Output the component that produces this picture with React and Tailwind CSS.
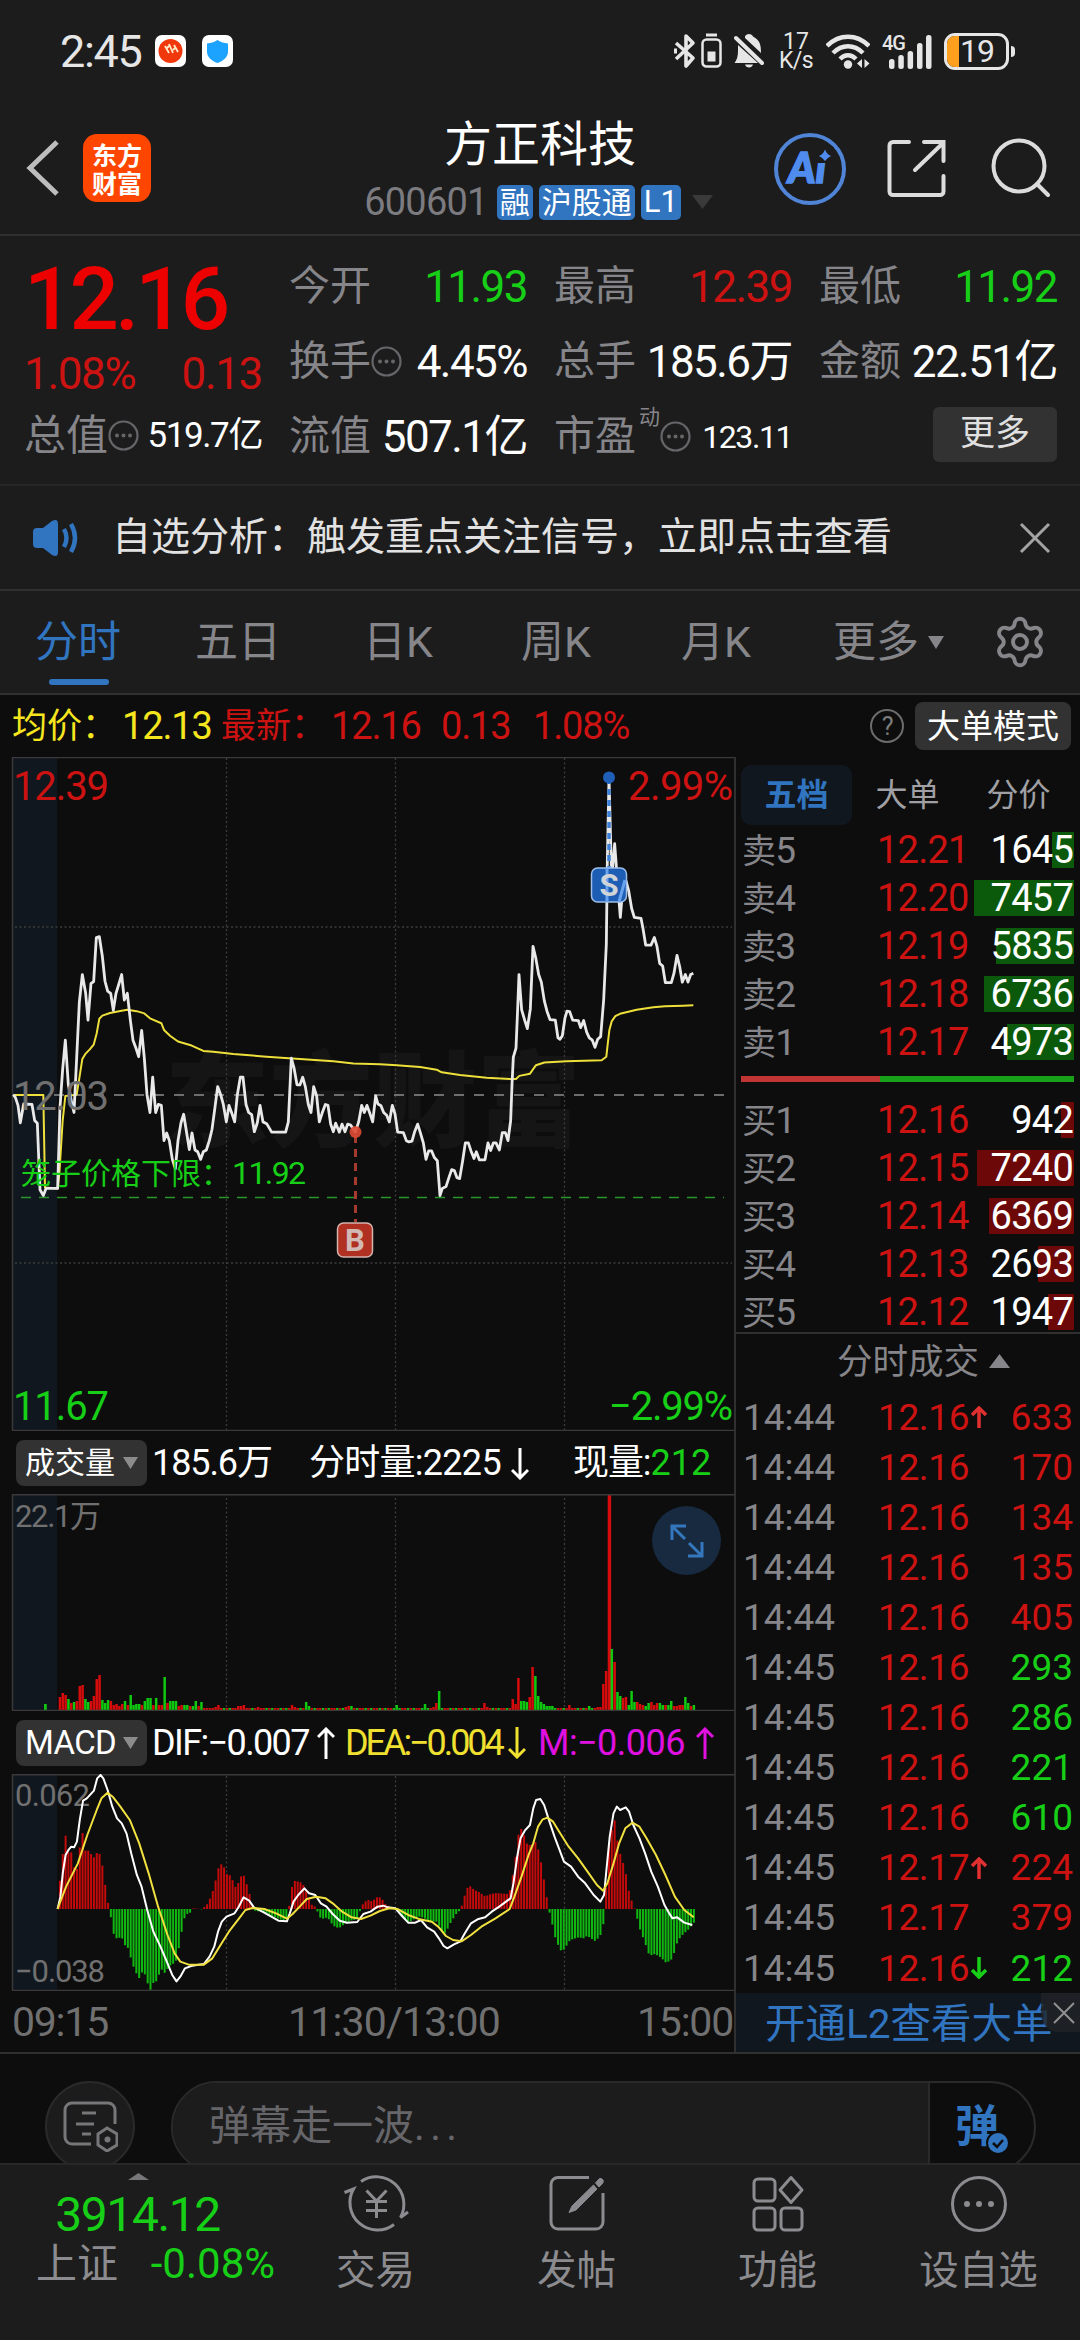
import { Settings } from "lucide-react";

const PRICE_LINE =
  "40,772 46,778 54,796 61,835 71,793 96,794 104,830 112,836 120,985 130,998 138,982 173,982 180,800 188,715 196,650 205,750 215,790 222,812 230,690 238,565 247,503 257,545 264,605 273,523 281,519 289,420 298,418 307,462 315,518 323,540 332,545 340,583 348,545 357,523 365,503 373,560 382,545 391,605 399,650 408,668 416,687 425,628 433,690 441,772 450,812 458,733 467,812 475,794 484,796 492,875 500,858 508,875 517,917 526,938 534,875 543,835 551,816 560,858 568,895 576,858 585,896 593,900 602,917 610,900 619,896 628,875 636,850 645,800 653,754 662,772 670,794 679,833 687,796 696,815 704,833 712,772 721,733 729,733 738,794 746,812 755,817 763,855 772,835 780,796 789,833 800,837 815,856 857,856 865,833 874,690 882,712 891,750 900,750 908,733 916,754 925,794 933,812 941,754 950,775 958,833 967,812 976,794 984,796 992,838 1000,855 1007,836 1018,856 1026,838 1035,855 1043,838 1052,840 1066,856 1076,833 1085,796 1093,812 1101,796 1110,815 1118,833 1127,775 1134,793 1143,797 1151,812 1160,818 1168,833 1177,796 1185,815 1193,856 1210,857 1219,875 1227,878 1236,876 1244,855 1253,838 1261,857 1270,880 1278,917 1286,898 1295,898 1303,913 1312,920 1320,998 1327,982 1338,978 1348,955 1355,940 1363,942 1371,958 1379,960 1388,920 1396,880 1405,880 1413,898 1422,915 1429,900 1438,918 1455,918 1464,880 1472,897 1480,880 1488,880 1498,896 1507,857 1516,857 1524,875 1532,830 1536,750 1540,688 1548,668 1553,580 1557,503 1565,582 1574,605 1582,624 1591,580 1599,440 1607,465 1616,503 1624,520 1633,562 1641,585 1650,604 1666,605 1674,645 1680,648 1687,640 1695,600 1701,585 1709,586 1718,605 1735,606 1742,622 1751,606 1760,632 1768,645 1777,650 1785,666 1793,648 1802,642 1811,560 1819,435 1822,250 1827,62 1835,290 1844,210 1852,290 1861,375 1870,293 1878,293 1886,315 1895,355 1903,375 1923,377 1929,400 1937,437 1953,437 1963,420 1971,440 1979,478 1988,484 1996,521 2014,521 2022,500 2031,460 2039,485 2047,520 2056,503 2064,520 2072,503 2080,500";

const AVG_LINE =
  "40,773 130,773 135,980 173,982 178,950 188,830 196,775 230,772 238,735 247,692 257,680 270,670 281,660 290,635 298,602 307,595 330,589 365,584 382,582 410,585 433,590 450,601 484,612 492,627 510,640 534,653 575,662 610,674 640,676 700,681 800,687 900,692 1000,697 1060,702 1140,704 1190,706 1260,710 1310,716 1325,722 1380,728 1460,734 1530,737 1548,737 1558,730 1590,725 1608,706 1633,700 1700,697 1805,695 1819,687 1823,660 1828,628 1835,608 1846,596 1860,591 1910,582 1960,576 1995,574 2050,573 2080,572";

const DIF_LINE =
  "122,597 128,560 133,490 139,435 146,418 151,410 157,412 163,395 169,330 176,272 184,265 199,242 206,205 213,195 219,205 228,240 238,290 248,325 258,340 268,370 278,430 290,495 300,530 312,600 325,665 340,710 355,760 365,795 374,814 382,800 392,775 405,768 420,764 432,762 444,740 454,710 462,665 470,635 480,620 497,610 506,590 516,562 528,572 538,592 556,605 575,620 590,632 608,634 614,610 622,575 632,555 645,535 655,550 668,555 680,580 692,590 705,612 720,632 735,638 757,636 770,612 785,605 800,590 812,587 822,592 838,595 850,615 865,638 880,638 892,630 905,652 920,665 930,685 940,708 948,715 962,703 975,695 985,670 998,640 1012,628 1028,622 1042,605 1058,590 1075,572 1082,565 1088,520 1096,440 1103,385 1112,362 1123,345 1130,295 1136,270 1145,267 1153,285 1162,325 1175,380 1195,455 1210,470 1225,500 1240,520 1258,555 1272,575 1280,555 1285,480 1292,380 1300,310 1307,290 1314,300 1326,292 1333,305 1342,345 1355,385 1367,430 1380,485 1394,530 1408,585 1418,610 1425,625 1435,622 1450,638 1467,645";

const DEA_LINE =
  "122,597 140,530 165,460 185,375 205,300 215,265 228,248 240,262 255,290 275,330 295,400 315,490 335,590 355,675 370,730 382,755 400,764 432,764 450,745 465,710 485,665 505,628 520,600 535,594 560,597 585,610 608,626 620,612 635,590 650,567 670,560 690,565 705,580 725,605 745,622 765,627 785,617 805,603 825,595 842,597 865,615 890,628 915,635 930,652 945,678 960,690 978,694 998,675 1020,650 1050,625 1080,597 1090,560 1105,500 1120,435 1130,400 1140,350 1150,328 1160,323 1172,335 1185,365 1205,410 1225,445 1245,485 1265,525 1278,542 1287,520 1300,460 1312,400 1325,355 1340,338 1355,350 1370,385 1390,435 1410,495 1430,560 1450,600 1470,622";

// histogram turning points: [x, height]
const MACD_KEYS = [
  [127, 85], [133, 165], [139, 220], [145, 170], [151, 170], [157, 125], [163, 120], [169, 185], [175, 228], [181, 175],
  [187, 175], [199, 155], [205, 168], [211, 165], [217, 130], [223, 72], [229, 18], [235, -25], [240, -72], [246, -88],
  [258, -85], [264, -108], [270, -112], [282, -170], [294, -210], [300, -190], [306, -192], [318, -246], [324, -222],
  [330, -220], [342, -180], [348, -193], [360, -170], [372, -160], [378, -125], [384, -75], [390, -30], [396, -15],
  [402, -13], [408, 2], [420, 1], [426, -2], [432, 5], [438, 12], [444, 28], [450, 50], [456, 80], [462, 120], [468, 135],
  [474, 128], [480, 105], [486, 103], [492, 90], [498, 65], [504, 75], [510, 97], [516, 103], [522, 78], [528, 50],
  [534, 12], [540, -5], [552, -8], [564, -15], [576, -20], [588, -28], [600, -35], [610, -25], [616, 50], [622, 85],
  [634, 82], [640, 78], [646, 65], [652, 50], [658, 15], [670, 5], [676, -22], [682, -30], [694, -25], [706, -50],
  [718, -58], [730, -45], [742, -35], [754, -32], [760, -20], [766, 10], [778, 28], [790, 22], [796, 35], [808, 35],
  [814, 18], [820, 12], [830, 2], [842, -5], [854, -25], [866, -40], [878, -30], [890, -22], [902, -30], [914, -38],
  [926, -38], [938, -70], [944, -72], [956, -38], [968, -12], [974, -5], [980, 15], [986, 48], [992, 68], [998, 68],
  [1004, 58], [1016, 50], [1028, 38], [1040, 45], [1052, 48], [1076, 45], [1082, 60], [1088, 115], [1094, 170],
  [1100, 240], [1106, 240], [1112, 215], [1118, 190], [1130, 195], [1136, 203], [1142, 170], [1148, 130], [1154, 75],
  [1160, 22], [1166, -22], [1172, -55], [1178, -95], [1190, -128], [1196, -120], [1208, -93], [1226, -85], [1238, -88],
  [1244, -80], [1262, -97], [1274, -75], [1280, -35], [1286, 100], [1292, 230], [1298, 240], [1304, 275], [1310, 180],
  [1316, 160], [1322, 130], [1328, 95], [1334, 40], [1340, 20], [1346, -5], [1352, -38], [1358, -70], [1364, -90],
  [1376, -140], [1388, -135], [1400, -145], [1412, -162], [1424, -150], [1430, -125], [1436, -95], [1448, -75],
  [1460, -60], [1471, -40],
];

const macdBars = [];
for (let i = 0; i < 225; i++) {
  const x = 127 + i * 5.997;
  const k = Math.max(1, MACD_KEYS.findIndex(([kx]) => kx >= x));
  const [x0, h0] = MACD_KEYS[k - 1];
  const [x1, h1] = MACD_KEYS[k];
  macdBars.push({ x: x / 2.119, h: (h0 + ((h1 - h0) * (x - x0)) / (x1 - x0)) / 3 });
}

// runs of per-minute volume, keyed by the first minute; negative = falling minute
const VOLUME_RUNS = {
  0: [14, 18, 16, -12, 8, -9, 10, 25, 26, -12, -9, 10, 15, 32, 36, -11, -8, -11, 10, 6, 7, 5, 7, -10, 6, -16, -6, -7, -7, 6, -10, -13, -13, 6, -13, 6, 6, -34, 8, -10, -10, -10, 5, 6, -6, -6, 5, -5, -10, 5, -9, 3, 3, 3, 3, 4, 6],
  63: [5, 5, 6],
  70: [4],
  82: [6, 4],
  87: [-9, -5],
  101: [4, 5, -5],
  119: [-6],
  129: [-7],
  132: [4, 8, -20],
  150: [8, 4],
  160: [12, 7, 33, -10, -10, -9, 14, 44, -35, -15, -9, -7, -5, -5, -5],
  180: [6],
  187: [-5],
  190: [4, 4, 27, 40, 216, -62, 49, -19, -15, 13, 14, -6, -20, -9, 9, 7, 6, -5, -8, 9, 6, 8, -8, -6, 6, -6, -10, 5, 5, 6, 6, -14, -8, 5, -6, 6, 3],
};

const volumes = Array.from({ length: 225 }, (_, i) => ((i * 7) % 5 < 2 ? -3 : 3));
Object.entries(VOLUME_RUNS).forEach(([start, run]) => {
  run.forEach((v, j) => {
    if (+start + j < 225) volumes[+start + j] = v;
  });
});

const ASKS = [
  ["卖5", "12.21", 1645],
  ["卖4", "12.20", 7457],
  ["卖3", "12.19", 5835],
  ["卖2", "12.18", 6736],
  ["卖1", "12.17", 4973],
];

const BIDS = [
  ["买1", "12.16", 942],
  ["买2", "12.15", 7240],
  ["买3", "12.14", 6369],
  ["买4", "12.13", 2693],
  ["买5", "12.12", 1947],
];

const TRADES = [
  ["14:44", "12.16", "up", 633, true],
  ["14:44", "12.16", "", 170, true],
  ["14:44", "12.16", "", 134, true],
  ["14:44", "12.16", "", 135, true],
  ["14:44", "12.16", "", 405, true],
  ["14:45", "12.16", "", 293, false],
  ["14:45", "12.16", "", 286, false],
  ["14:45", "12.16", "", 221, false],
  ["14:45", "12.16", "", 610, false],
  ["14:45", "12.17", "up", 224, true],
  ["14:45", "12.17", "", 379, true],
  ["14:45", "12.16", "down", 212, false],
];

function Arrow({ down, className, w = 18, h = 32, sw = 3 }) {
  return (
    <svg width={w} height={h} viewBox={`0 0 ${w} ${h}`} className={`shrink-0 ${className}`} fill="none" stroke="currentColor" strokeWidth={sw}>
      <g transform={down ? `rotate(180 ${w / 2} ${h / 2})` : undefined}>
        <path d={`M${w / 2} ${h}V2M1 ${w / 2 + 1}L${w / 2} 2L${w - 1} ${w / 2 + 1}`} />
      </g>
    </svg>
  );
}

function Triangle({ up, w, h, className }) {
  return (
    <svg width={w} height={h} viewBox="0 0 10 10" preserveAspectRatio="none" className={`shrink-0 ${className}`} fill="currentColor">
      <path d={up ? "M0 10L5 0L10 10Z" : "M0 0H10L5 10Z"} />
    </svg>
  );
}

function InfoDot() {
  return (
    <svg width="31" height="31" viewBox="0 0 31 31" className="shrink-0 text-[#66666a]" fill="none" stroke="currentColor" strokeWidth="2.2">
      <circle cx="15.5" cy="15.5" r="14" />
      <g fill="currentColor" stroke="none">
        <circle cx="9" cy="15.5" r="2" />
        <circle cx="15.5" cy="15.5" r="2" />
        <circle cx="22" cy="15.5" r="2" />
      </g>
    </svg>
  );
}

function StatusBar() {
  return (
    <div className="flex h-[102px] items-center pl-[60px] pr-[65px] text-[#e6e6e6]">
      <span className="w-[95px] text-[45px] leading-none tracking-[-0.03em]">2:45</span>
      <svg width="31" height="32" viewBox="0 0 31 32">
        <rect width="31" height="32" rx="7" fill="#fff" />
        <circle cx="15.5" cy="16" r="12" fill="#f0380c" />
        <path d="M10 11l4 7M14 9l4 9M19 10l4 7M11 14l3-3M18 15l3-3" stroke="#ffe9c8" strokeWidth="1.8" />
      </svg>
      <svg width="31" height="32" viewBox="0 0 31 32" className="ml-[16px]">
        <rect width="31" height="32" rx="7" fill="#fff" />
        <path d="M15.500 5C19 7.500 22 8 26 8.500V17C26 22 21 26 15.500 28C10 26 5 22 5 17V8.500C9 8 12 7.500 15.500 5Z" fill="#1ca2ff" />
      </svg>
      <div className="ml-auto flex items-center">
        <svg width="22" height="36" viewBox="0 0 22 36" fill="none" stroke="currentColor" strokeWidth="3.600" strokeLinejoin="round">
          <path d="M2 10L19 25L12 33V3L19 10L2 26" />
          <path d="M1.500 15.500v5" strokeWidth="3" />
        </svg>
        <svg width="21" height="36" viewBox="0 0 21 36" fill="none" stroke="currentColor" strokeWidth="2.500" className="ml-[5px]">
          <path d="M5 2h11" strokeWidth="3" />
          <rect x="1.500" y="6.500" width="18" height="27" rx="4" />
          <rect x="6.500" y="18.500" width="8" height="10" fill="currentColor" stroke="none" />
        </svg>
        <svg width="30" height="36" viewBox="0 0 30 36" fill="currentColor" className="ml-[12px]">
          <path d="M11 3.500C12 0 18 0 19 3.500C26 7 27 12 27 20L11 5ZM4 12L24 30H0.500C3 27 4 23 4 18ZM11 31.500H19C18 35.500 12 35.500 11 31.500Z" />
          <path d="M2 5L28 30" stroke="currentColor" strokeWidth="4" strokeLinecap="round" />
        </svg>
        <div className="ml-[13px] flex w-[38px] flex-col items-center text-[23px] leading-[19px]">
          <span>17</span>
          <span className="tracking-tight">K/s</span>
        </div>
        <svg width="44" height="35" viewBox="0 0 44 35" fill="none" stroke="currentColor" strokeWidth="4.500" className="ml-[11px]">
          <path d="M1 12C13 -0.500 31 -0.500 43 12M7 19C16 10 28 10 37 19M14 25C19 20 25 20 30 25" />
          <circle cx="22" cy="30.500" r="4.200" fill="currentColor" stroke="none" />
          <path d="M36 25v9l-5-4.500zM38.500 25v9l5-4.500z" fill="currentColor" stroke="none" />
        </svg>
        <div className="relative ml-[12px] h-[36px] w-[50px]">
          <span className="absolute left-0 top-0 text-[20px] font-medium leading-[20px] tracking-tighter">4G</span>
          <svg width="43" height="34" viewBox="0 0 43 34" className="absolute bottom-0 right-0" fill="currentColor">
            <rect x="0" y="24" width="5.500" height="10" rx="2.500" />
            <rect x="9.300" y="20" width="5.500" height="14" rx="2.500" />
            <rect x="18.600" y="16" width="5.500" height="18" rx="2.500" />
            <rect x="28" y="8" width="5.500" height="26" rx="2.500" />
            <rect x="37" y="0" width="5.500" height="34" rx="2.500" />
          </svg>
        </div>
        <div className="ml-[12px] flex h-[37px] w-[65px] items-center overflow-hidden rounded-[11px] border-[3px] border-current">
          <div className="h-full w-[12px] bg-[#ff9f1e]" />
          <span className="ml-[1px] text-[32px] leading-none tracking-[-0.03em]">19</span>
        </div>
        <div className="ml-[2px] h-[11px] w-[4px] rounded-r bg-current" />
      </div>
    </div>
  );
}

function Header() {
  return (
    <div className="flex h-[134px] items-start border-b-2 border-[#303030] pl-[26px] pr-[30px]">
      <svg width="34" height="56" viewBox="0 0 34 56" className="mt-[38px]" fill="none" stroke="#bdbdbd" strokeWidth="5">
        <path d="M31 2L4 28L31 54" />
      </svg>
      <div className="ml-[23px] mt-[32px] flex h-[68px] w-[68px] flex-col items-center justify-center rounded-[14px] bg-[#ff4600] font-['Noto_Sans_CJK_SC'] text-[25px] font-bold leading-[28px] text-white">
        <span>东方</span>
        <span>财富</span>
      </div>
      <div className="flex flex-1 flex-col items-center pl-[155px]">
        <h1 className="mt-[17px] whitespace-nowrap text-[48px] leading-[52px] text-white">方正科技</h1>
        <div className="mr-[3px] mt-[13px] flex h-[36px] items-center gap-[6px] whitespace-nowrap">
          <span className="mr-[3px] text-[38px] leading-none tracking-[-0.02em] text-[#7b7b80]">600601</span>
          <span className="flex h-[35px] items-center rounded-[5px] bg-[#3174c0] px-[3px] text-[30px] text-white">融</span>
          <span className="flex h-[35px] items-center rounded-[5px] bg-[#3174c0] px-[3px] text-[30px] text-white">沪股通</span>
          <span className="flex h-[35px] items-center rounded-[5px] bg-[#3174c0] px-[3px] text-[31px] text-white">L1</span>
          <Triangle w={21} h={14} className="ml-[5px] text-[#3a3a3a]" />
        </div>
      </div>
      <svg width="72" height="72" viewBox="0 0 72 72" className="mt-[31px] shrink-0" fill="#4f8cee">
        <circle cx="36" cy="36" r="34" fill="none" stroke="#4f84d6" strokeWidth="4" />
        <text x="14" y="50" fontFamily="Lato" fontSize="42" fontWeight="900" fontStyle="italic" stroke="#4f8cee" strokeWidth="1.500">
          Ai
        </text>
        <rect x="42" y="14" width="18" height="16" fill="#1c1c1c" />
        <path d="M51 16.500q2 5 6 6.500q-4 2-6 5q-2-3-6-5q4-1.500 6-6.500z" />
      </svg>
      <svg width="60" height="60" viewBox="0 0 60 60" className="ml-[41px] mt-[37px] shrink-0" fill="none" stroke="#dcdcdc" strokeWidth="4" strokeLinecap="round">
        <path d="M22 3H6a3.500 3.500 0 0 0-3.500 3.500v46a3.500 3.500 0 0 0 3.500 3.500h47a3.500 3.500 0 0 0 3.500-3.500V37M37 3H56.500V22M55 5L28 31" />
      </svg>
      <svg width="60" height="60" viewBox="0 0 60 60" className="ml-[43px] mt-[36px] shrink-0" fill="none" stroke="#dcdcdc" strokeWidth="4" strokeLinecap="round">
        <circle cx="29" cy="28" r="25.500" />
        <path d="M47 46L58 57" />
      </svg>
    </div>
  );
}

function Stat({ label, value, info, color = "text-white" }) {
  return (
    <div className="flex h-[75px] items-center">
      <span className="text-[41px] leading-none text-[#85858a]">{label}</span>
      {info && <InfoDot />}
      <span className={`ml-auto whitespace-nowrap text-[44px] leading-none tracking-[-0.035em] ${color}`}>{value}</span>
    </div>
  );
}

function Quote() {
  return (
    <div className="grid h-[250px] grid-cols-4 gap-x-[27px] border-b-2 border-[#262626] pl-[24px] pr-[23px]">
      <div className="flex flex-col">
        <div className="mt-[17px] h-[88px] whitespace-nowrap text-[87px] font-medium leading-[92px] tracking-[-0.045em] text-[#ec0000]">12.16</div>
        <div className="mt-[10px] flex h-[45px] items-center justify-between text-[44px] leading-none tracking-[-0.03em] text-[#cd1212]">
          <span>1.08%</span>
          <span>0.13</span>
        </div>
        <div className="mt-[2px] flex h-[75px] items-center whitespace-nowrap">
          <span className="text-[42px] leading-none text-[#85858a]">总值</span>
          <InfoDot />
          <span className="ml-auto text-[35px] leading-none tracking-[-0.04em] text-white">519.7亿</span>
        </div>
      </div>
      <div className="pt-[13px]">
        <Stat label="今开" value="11.93" color="text-[#17cf17]" />
        <Stat label="换手" value="4.45%" info />
        <Stat label="流值" value="507.1亿" />
      </div>
      <div className="pt-[13px]">
        <Stat label="最高" value="12.39" color="text-[#cd1212]" />
        <Stat label="总手" value="185.6万" />
        <div className="flex h-[75px] items-center">
          <span className="text-[41px] leading-none text-[#85858a]">市盈</span>
          <span className="mb-[38px] ml-[3px] text-[21px] leading-none text-[#85858a]">动</span>
          <InfoDot />
          <span className="ml-auto text-[32px] leading-none tracking-[-0.045em] text-white">123.11</span>
        </div>
      </div>
      <div className="pt-[13px]">
        <Stat label="最低" value="11.92" color="text-[#17cf17]" />
        <Stat label="金额" value="22.51亿" />
        <button className="ml-auto mt-[8px] flex h-[55px] w-[124px] items-center justify-center rounded-[6px] bg-[#323232] text-[35px] text-[#e0e0e0]">更多</button>
      </div>
    </div>
  );
}

function Notice() {
  return (
    <div className="flex h-[105px] items-center border-b-2 border-[#303030] pl-[33px] pr-[29px]">
      <svg width="45" height="38" viewBox="0 0 45 38" fill="#3174c0">
        <path d="M0 13Q0 9 4 9H10L19 2Q25 -1 25 5V33Q25 39 19 36L10 29H4Q0 29 0 25Z" />
        <path d="M31 10Q36 19 31 28M38 5Q46 19 38 33" fill="none" stroke="#3174c0" strokeWidth="4.500" />
      </svg>
      <span className="ml-[34px] text-[39px] leading-none text-[#e2e2e2]">自选分析：触发重点关注信号，立即点击查看</span>
      <svg width="32" height="32" viewBox="0 0 32 32" className="ml-auto" stroke="#a4a4a4" strokeWidth="3">
        <path d="M2 2L30 30M30 2L2 30" />
      </svg>
    </div>
  );
}

function Tabs() {
  return (
    <div className="flex h-[104px] items-center border-b-2 border-[#303030] pl-[35px] text-[43px] leading-none text-[#85858a]">
      <span className="w-[160px] text-[#3174c0]">
        <span className="relative">
          分时
          <span className="absolute -bottom-[18px] left-[14px] h-[6px] w-[60px] rounded-full bg-[#3174c0]" />
        </span>
      </span>
      <span className="w-[168px]">五日</span>
      <span className="w-[158px]">日K</span>
      <span className="w-[160px]">周K</span>
      <span className="w-[152px]">月K</span>
      <span className="flex w-[159px] items-center gap-[9px]">
        更多
        <Triangle w={16} h={13} />
      </span>
      <Settings size={56} strokeWidth={1.7} />
    </div>
  );
}

function InfoBar() {
  return (
    <div className="flex h-[62px] items-center whitespace-pre bg-[#0d0d0d] pl-[12px] pr-[9px] text-[38px] leading-none tracking-[-0.03em]">
      <span className="flex w-[209px] items-center text-[#f5e61e]">
        <span className="w-[110px] text-[35px] tracking-normal">均价：</span>12.13
      </span>
      <span className="flex items-center text-[#cd1212]">
        <span className="w-[110px] text-[35px] tracking-normal">最新：</span>
        <span className="w-[110px]">12.16</span>
        <span className="w-[92px]">0.13</span>
        <span>1.08%</span>
      </span>
      <span className="ml-auto flex h-[34px] w-[34px] items-center justify-center rounded-full border-2 border-[#6c6c6c] text-[25px] text-[#7c7c7c]">?</span>
      <button className="ml-[11px] flex h-[48px] w-[156px] items-center justify-center rounded-[8px] bg-[#323232] text-[33px] tracking-normal text-white">大单模式</button>
    </div>
  );
}

function GridLines({ y1, y2 }) {
  return (
    <g stroke="#3c3c3c" strokeWidth="1.3" strokeDasharray="2 2.500">
      {[226.5, 395.5, 564.5].map((x) => (
        <path key={x} d={`M${x} ${y1}V${y2}`} />
      ))}
    </g>
  );
}

function PriceChart() {
  return (
    <svg width="734" height="674" viewBox="0 757 734 674" className="block font-[Roboto,'Noto_Sans_CJK_SC',sans-serif]">
      <rect x="13" y="758" width="44" height="673" fill="#10171f" />
      <text x="165" y="1139" fontSize="104" fontWeight="900" fill="#151515" fontFamily="Noto Sans CJK SC" textLength="416">
        东方财富
      </text>
      <GridLines y1={758} y2={1431} />
      <path d="M15 927H732M15 1263H732" stroke="#3c3c3c" strokeWidth="1.3" strokeDasharray="2 2.500" />
      <path d="M12.500 1431V757.500H734M12 1430.500H734" stroke="#3a3a3a" strokeWidth="1.500" fill="none" />
      <path d="M14 1095H734" stroke="#8c8c8c" strokeWidth="1.600" strokeDasharray="10 10" />
      <path d="M21 1197.500H724" stroke="#2a962a" strokeWidth="1.600" strokeDasharray="10 8" />
      <g transform="translate(0 750) scale(0.33333 0.44643)" fill="none" strokeLinejoin="round">
        <polyline points={AVG_LINE} stroke="#eee03a" strokeWidth="2" vectorEffect="non-scaling-stroke" />
        <polyline points={PRICE_LINE} stroke="#e9e9e9" strokeWidth="2.800" vectorEffect="non-scaling-stroke" />
      </g>
      <g fontSize="40">
        <text x="13" y="800" fill="#cd1212" textLength="96">12.39</text>
        <text x="13" y="1110" fill="#707070" textLength="96">12.03</text>
        <text x="13" y="1420" fill="#17cf17" textLength="96">11.67</text>
        <text x="628" y="800" fill="#cd1212" textLength="105">2.99%</text>
        <text x="609" y="1420" fill="#17cf17" textLength="124">−2.99%</text>
      </g>
      <text x="21" y="1184" fontSize="30" fill="#17cf17">笼子价格下限：</text>
      <text x="232" y="1184" fontSize="32" fill="#17cf17" textLength="74">11.92</text>
      <path d="M355.500 1135V1222" stroke="#a63a2c" strokeWidth="3" strokeDasharray="8 6" />
      <circle cx="355.500" cy="1132" r="6" fill="#e04a34" fillOpacity=".9" />
      <rect x="337.500" y="1223" width="35" height="34" rx="6" fill="#b03022" stroke="#d3b3ae" strokeWidth="1.500" />
      <text x="355" y="1251" fontSize="31" fontWeight="700" textAnchor="middle" fill="#d3b9b5">B</text>
      <path d="M609 778V868" stroke="#3d80d8" strokeWidth="3.500" strokeDasharray="6 5" />
      <circle cx="609" cy="777.500" r="6" fill="#1f5fb8" />
      <rect x="591.500" y="868" width="35" height="34" rx="6" fill="#1d5db4" stroke="#9fbfe8" strokeWidth="1.500" />
      <path d="M607 868V902M619 902L625 880" stroke="#69a2ee" strokeWidth="3" />
      <text x="609" y="896" fontSize="31" fontWeight="700" textAnchor="middle" fill="#d0d3d8">S</text>
    </svg>
  );
}

function IndicatorSelect({ children }) {
  return (
    <button className="mr-[5px] flex h-[46px] w-[131px] shrink-0 items-center justify-between rounded-[8px] bg-[#323232] pl-[9px] pr-[9px] text-white">
      {children}
      <Triangle w={15} h={12} className="text-[#8c8c8c]" />
    </button>
  );
}

function VolumeChart() {
  return (
    <div className="relative">
      <svg width="734" height="217" viewBox="0 1494 734 217" className="block font-[Roboto,'Noto_Sans_CJK_SC',sans-serif]">
        <rect x="13" y="1495" width="44" height="216" fill="#10171f" />
        <GridLines y1={1498} y2={1711} />
        <text x="15" y="1527" fontSize="31" fill="#707070" textLength="86">22.1万</text>
        <rect x="44" y="1704" width="2.800" height="7" fill="#12c412" />
        {volumes.map((v, i) => (
          <rect key={i} x={58.700 + i * 2.830} y={1711 - Math.abs(v)} width={Math.abs(v) > 150 ? 3.4 : 2.500} height={Math.abs(v)} fill={v > 0 ? "#d60c0c" : "#10c810"} />
        ))}
        <path d="M12.500 1711V1494.700H734M12 1710.500H734" stroke="#3a3a3a" strokeWidth="1.500" fill="none" />
      </svg>
      <div className="absolute right-[13px] top-[12px] flex h-[69px] w-[69px] items-center justify-center rounded-full bg-[#172a40]">
        <svg width="34" height="34" viewBox="0 0 34 34" fill="none" stroke="#3577bd" strokeWidth="3">
          <path d="M2 16V2H16M2 2L15 15M32 18V32H18M19 19L32 32" />
        </svg>
      </div>
    </div>
  );
}

function MacdChart() {
  return (
    <svg width="734" height="217" viewBox="0 1774 734 217" className="block font-[Roboto]">
      <rect x="13" y="1775" width="44" height="216" fill="#10171f" />
      <GridLines y1={1776} y2={1991} />
      {macdBars.map(({ x, h }, i) => (
        <rect key={i} x={x - 1} y={h > 0 ? 1909 - h : 1909} width="2" height={Math.abs(h)} fill={h > 0 ? "#c40a0a" : "#11b811"} />
      ))}
      <text x="15" y="1806" fontSize="31" fill="#707070" textLength="75">0.062</text>
      <text x="15" y="1982" fontSize="31" fill="#707070" textLength="90">−0.038</text>
      <path d="M12.500 1991V1774.700H734M12 1990.500H734" stroke="#3a3a3a" strokeWidth="1.500" fill="none" />
      <g transform="translate(0 1710) scale(0.47192 0.33333)" fill="none" strokeWidth="2" strokeLinejoin="round">
        <polyline points={DIF_LINE} stroke="#fff" vectorEffect="non-scaling-stroke" />
        <polyline points={DEA_LINE} stroke="#f0e040" vectorEffect="non-scaling-stroke" />
      </g>
    </svg>
  );
}

function Charts() {
  return (
    <div className="w-[734px] shrink-0">
      <PriceChart />
      <div className="flex h-[63px] items-center whitespace-nowrap pl-[16px] text-[36px] leading-none tracking-[-0.03em] text-white">
        <IndicatorSelect>
          <span className="text-[30px] tracking-normal">成交量</span>
        </IndicatorSelect>
        <span className="w-[157px]">185.6万</span>
        <span className="w-[202px] tracking-[-0.02em]">分时量:2225</span>
        <Arrow down className="mr-[44px] mt-[2px]" />
        <span>现量:</span>
        <span className="tracking-normal text-[#17cf17]">212</span>
      </div>
      <VolumeChart />
      <div className="flex h-[63px] items-center whitespace-nowrap pl-[16px] text-[36px] leading-none tracking-[-0.045em] text-white">
        <IndicatorSelect>
          <span className="text-[33px] tracking-[-0.02em]">MACD</span>
        </IndicatorSelect>
        <span className="w-[165px]">DIF:−0.007</span>
        <Arrow />
        <span className="ml-[10px] w-[163px] tracking-[-0.085em] text-[#f0e030]">DEA:−0.004</span>
        <Arrow down className="text-[#f0e030]" />
        <span className="ml-[12px] w-[158px] tracking-[-0.015em] text-[#e010e0]">M:−0.006</span>
        <Arrow className="text-[#e010e0]" />
      </div>
      <MacdChart />
      <div className="flex h-[61px] items-center justify-between pl-[12px] pr-px pt-[2px] text-[41px] leading-none tracking-[-0.03em] text-[#707070]">
        <span>09:15</span>
        <span className="ml-[43px] tracking-[-0.02em]">11:30/13:00</span>
        <span>15:00</span>
      </div>
    </div>
  );
}

function OrderRow({ row, bar }) {
  const [label, price, volume] = row;
  return (
    <div className="relative flex h-[48px] items-center pl-[6px] pr-[7px] text-[38px] leading-none tracking-[-0.02em]">
      <span className="w-[135px] text-[37px] text-[#85858a]">
        <span className="text-[34px]">{label[0]}</span>
        {label[1]}
      </span>
      <span className="text-[#cd1212]">{price}</span>
      <span className={`absolute right-[6px] top-[6px] h-[36px] ${bar}`} style={{ width: volume / 74.57 }} />
      <span className="relative ml-auto text-white">{volume}</span>
    </div>
  );
}

function OrderBook() {
  return (
    <div className="relative flex w-[346px] flex-col border-l-2 border-[#303030]">
      <div className="flex h-[69px] items-center pl-[5px] pt-[6px] text-[32px] leading-none text-[#a0a0a4]">
        <span className="flex h-[60px] w-[111px] items-center justify-center rounded-[10px] bg-[#10171f] font-bold text-[#3174c0]">五档</span>
        <span className="flex w-[111px] justify-center">大单</span>
        <span className="flex w-[111px] justify-center">分价</span>
      </div>
      {ASKS.map((row) => (
        <OrderRow key={row[0]} row={row} bar="bg-[#0b5a0b]" />
      ))}
      <div className="ml-[5px] mr-[6px] mt-[10px] flex h-[6px]">
        <div className="w-[139px] bg-[#c03434]" />
        <div className="flex-1 bg-[#18a018]" />
      </div>
      <div className="mt-[14px] h-[238px] border-b-2 border-[#303030]">
        {BIDS.map((row) => (
          <OrderRow key={row[0]} row={row} bar="bg-[#6c0808]" />
        ))}
      </div>
      <div className="flex h-[58px] items-center gap-[10px] pl-[101px] text-[35.500px] leading-none text-[#85858a]">
        <span>分时成交</span>
        <Triangle up w={21} h={14} className="mb-[4px]" />
      </div>
      {TRADES.map(([time, price, dir, volume, buy], i) => (
        <div key={i} className="flex h-[50.1px] items-center pl-[7px] pr-[7px] text-[37px] leading-none">
          <span className="w-[135px] text-[#85858a]">{time}</span>
          <span className="w-[93px] tracking-[-0.01em] text-[#cd1212]">{price}</span>
          {dir === "up" && <Arrow w={16} h={22} sw={3.5} className="text-[#e03030]" />}
          {dir === "down" && <Arrow down w={16} h={22} sw={3.5} className="text-[#17cf17]" />}
          <span className={buy ? "ml-auto text-[#cd1212]" : "ml-auto text-[#17cf17]"}>{volume}</span>
        </div>
      ))}
      <div className="flex flex-1 items-center bg-[#10171f] pl-[29px] pt-[3px] text-[40.500px] leading-none text-[#3174c0]">开通L2查看大单</div>
      <span className="absolute bottom-[20px] right-0 flex h-[39px] w-[39px] items-center justify-center rounded-bl-[18px] bg-[#202428]/80">
        <svg width="22" height="22" viewBox="0 0 22 22" className="ml-[6px]" stroke="#909090" strokeWidth="2">
          <path d="M1 1L21 21M21 1L1 21" />
        </svg>
      </span>
    </div>
  );
}

function CommentBar() {
  return (
    <div className="flex h-[111px] items-start overflow-hidden border-t-2 border-[#303030] bg-[#0d0d0d] pl-[45px] pt-[27px]">
      <div className="flex h-[90px] w-[90px] shrink-0 items-center justify-center rounded-full border-2 border-[#2a2a2a] bg-[#1c1c1c]">
        <svg width="56" height="52" viewBox="0 0 56 52" fill="none" stroke="#77777a" strokeWidth="3">
          <path d="M29 44H10a7 7 0 0 1-7-7V10a7 7 0 0 1 7-7H46a7 7 0 0 1 7 7V24" />
          <path d="M20 13H34M14 24H32M20 34H29" />
          <path d="M45 28L55 34V45L45 51L36 45V34Z" />
          <circle cx="45.500" cy="39.500" r="3" fill="#77777a" stroke="none" />
        </svg>
      </div>
      <div className="ml-[36px] flex h-[92px] w-[865px] shrink-0 overflow-hidden rounded-full border-2 border-[#2a2a2a]">
        <div className="flex w-[757px] items-center border-r-2 border-[#2a2a2a] bg-[#1c1c1c] pl-[36px] text-[41px] text-[#66666a]">
          弹幕走一波<span className="tracking-[0.13em]">...</span>
        </div>
        <div className="relative flex items-center pl-[25px] text-[44px] font-bold text-[#3174c0]">
          弹
          <svg width="24" height="24" viewBox="0 0 24 24" className="absolute left-[56px] top-[48px]">
            <circle cx="12" cy="12" r="11" fill="#3174c0" stroke="#0d0d0d" strokeWidth="2" />
            <path d="M7 12l4 4 6-7" fill="none" stroke="#0d0d0d" strokeWidth="2.500" />
          </svg>
        </div>
      </div>
    </div>
  );
}

function NavItem({ label, children }) {
  return (
    <div className="flex w-[201px] flex-col items-center pt-[9px] text-[39.500px] leading-none text-[#8c8c90]">
      <svg width="66" height="60" viewBox="0 0 66 60" className="overflow-visible" fill="none" stroke="currentColor" strokeWidth="3">
        {children}
      </svg>
      <span className="mt-[17px]">{label}</span>
    </div>
  );
}

function BottomNav() {
  return (
    <div className="flex h-[177px] border-t-2 border-[#282828] bg-[#1c1c1c]">
      <div className="w-[275px] whitespace-nowrap leading-none">
        <Triangle up w={21} h={7} className="ml-[128px] mt-[8px] block text-[#77777a]" />
        <div className="mt-[12px] w-[275px] text-center text-[48px] leading-[45px] tracking-[-0.03em] text-[#17cf17]">3914.12</div>
        <div className="mt-[6px] flex items-center pl-[36px] text-[41px]">
          <span className="w-[117px] text-[#8c8c90]">上证</span>
          <span className="text-[42px] text-[#17cf17]">-0.08%</span>
        </div>
      </div>
      <NavItem label="交易">
        <path d="M18 7.500A27.500 27.500 0 0 1 57.500 43.500L65 38M51 50.500A27.500 27.500 0 0 1 10.500 15L1.500 18.500" />
        <path d="M23.500 16.500L33.500 27L43.500 16.500M33.500 27V44M23 27.500H44M23 36.500H44" />
      </NavItem>
      <NavItem label="发帖">
        <path d="M45 3.500H14a7 7 0 0 0-7 7V48a7 7 0 0 0 7 7H52a7 7 0 0 0 7-7V19" />
        <path d="M55.500 4.500Q58 4 59 6Q60 8 58 10L55 13L51.500 9ZM49.500 11L53 15L32 36L25 38.500L28 32Z" fill="currentColor" strokeWidth="1" />
      </NavItem>
      <NavItem label="功能">
        <rect x="9" y="5" width="21" height="22" rx="4" />
        <path d="M46 3.500L57 16L46 28.500L35 16Z" strokeLinejoin="round" />
        <rect x="9" y="34" width="21" height="22" rx="4" />
        <rect x="36" y="34" width="21" height="22" rx="4" />
      </NavItem>
      <NavItem label="设自选">
        <circle cx="33" cy="30" r="26.500" />
        <g fill="currentColor" stroke="none">
          <circle cx="21" cy="30" r="3" />
          <circle cx="33" cy="30" r="3" />
          <circle cx="45" cy="30" r="3" />
        </g>
      </NavItem>
    </div>
  );
}

export default function App() {
  return (
    <div className="flex h-[2340px] w-[1080px] flex-col overflow-hidden bg-[#1c1c1c] font-[Roboto,'Noto_Sans_CJK_SC',sans-serif]">
      <StatusBar />
      <Header />
      <Quote />
      <Notice />
      <Tabs />
      <InfoBar />
      <div className="flex h-[1295px] bg-[#0d0d0d]">
        <Charts />
        <OrderBook />
      </div>
      <CommentBar />
      <BottomNav />
    </div>
  );
}
